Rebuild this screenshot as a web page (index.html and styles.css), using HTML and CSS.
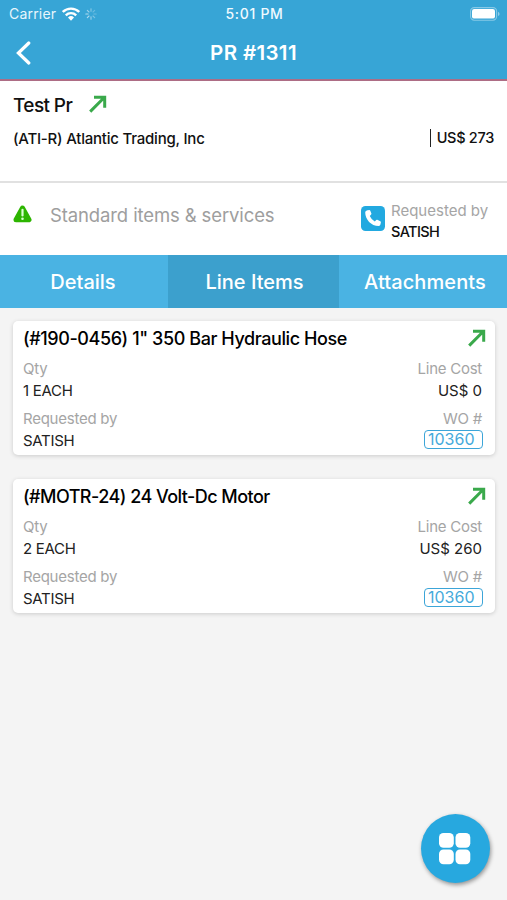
FILE: index.html
```html
<!DOCTYPE html>
<html lang="en">
<head>
<meta charset="utf-8">
<title>PR #1311</title>
<link rel="stylesheet" href="styles.css">
</head>
<body>
<svg width="0" height="0" class="defs">
  <symbol id="arrow" viewBox="0 0 18 18"><path d="M1.2 16.6 14.500 3.300M5 2.300H15.700v10.500" fill="none" stroke="currentColor" stroke-width="3"/></symbol>
</svg>
<header class="header">
  <div class="status">
    <div class="status-left">
      <span class="carrier">Carrier</span>
      <svg class="wifi" width="18" height="14" viewBox="0 0 18 14"><g fill="none" stroke="#fff" stroke-width="2.4"><path d="M.8 5A11.7 11.7 0 0 1 17.2 5"/><path d="M3.8 8.3a7.4 7.4 0 0 1 10.4 0"/></g><path d="M6 10.4a4.4 4.4 0 0 1 6 0L9 13.7z" fill="#fff"/></svg>
      <svg class="spinner" width="12" height="12" viewBox="0 0 12 12"><g stroke="#fff" stroke-width="1.1" stroke-linecap="round"><path d="M6 .8v2.4" opacity=".4"/><path d="M9.7 2.3 8 4" opacity=".25"/><path d="M11.2 6H8.8" opacity=".25"/><path d="M9.7 9.7 8 8" opacity=".35"/><path d="M6 11.2V8.8" opacity=".5"/><path d="M2.3 9.7 4 8" opacity=".6"/><path d="M.8 6h2.4" opacity=".6"/><path d="M2.3 2.3 4 4" opacity=".5"/></g></svg>
    </div>
    <span class="time">5:01 PM</span>
    <svg class="battery" width="30" height="14" viewBox="0 0 30 14"><rect x=".6" y=".6" width="26" height="12.6" rx="3.6" fill="none" stroke="#fff" stroke-opacity=".4" stroke-width="1.1"/><rect x="2" y="2" width="23" height="9.6" rx="2.2" fill="#fff"/><path d="M28 4.7q1.6.7 1.6 2.2T28 9.1z" fill="#fff" fill-opacity=".45"/></svg>
  </div>
  <div class="nav">
    <svg class="back" width="16" height="24" viewBox="0 0 16 24"><path d="M13.800 2 3.400 12l10.400 10" fill="none" stroke="#fff" stroke-width="3.200" stroke-linecap="round" stroke-linejoin="miter"/></svg>
    <h1 class="title">PR #1311</h1>
    <span></span>
  </div>
</header>
<section class="summary">
  <div class="summary-top"><h2 class="name">Test Pr</h2><svg class="arrow" width="18" height="18"><use href="#arrow"/></svg></div>
  <div class="summary-row"><span class="vendor">(ATI-R) Atlantic Trading, Inc</span><span class="total">US$ 273</span></div>
</section>
<section class="kind">
  <svg class="warn" width="19" height="18" viewBox="0 0 19 18"><path d="M9.5 3 16 14.8H3z" fill="#2db500" stroke="#2db500" stroke-width="5" stroke-linejoin="round"/><path d="M9.5 4.8v5.7" stroke="#d9ffd0" stroke-width="2.2" stroke-linecap="round"/><circle cx="9.5" cy="13.8" r="1.3" fill="#d9ffd0"/></svg>
  <span class="kind-label">Standard items &amp; services</span>
  <svg class="phone" width="24" height="25" viewBox="0 0 24 25"><rect width="24" height="25" rx="4.5" fill="#22a9e0"/><path d="M6.5 4.3 8.4 4q.6 0 .9.7l1.1 2.8q.2.6-.3 1.1L8.8 9.900q1.700 3.900 5 5.600l1.400-1.500q.5-.5 1.100-.2l3 1.400q.7.4.6 1l-.5 2.200q-.2 1.400-1.600 1.600C10 20 4.300 13.500 4.200 6.500Q4.200 4.700 6.500 4.300z" fill="#fff"/></svg>
  <div class="requester"><span class="muted">Requested by</span><span class="who">SATISH</span></div>
</section>
<nav class="tabs"><a class="tab t1">Details</a><a class="tab t2 active">Line Items</a><a class="tab t3">Attachments</a></nav>
<main class="list">
  <article class="card">
    <div class="card-head"><h3 class="item i1">(#190-0456) 1" 350 Bar Hydraulic Hose</h3><svg class="arrow" width="18" height="18"><use href="#arrow"/></svg></div>
    <div class="row"><span class="muted">Qty</span><span class="muted">Line Cost</span></div>
    <div class="row value"><span>1 EACH</span><span class="cost">US$ 0</span></div>
    <div class="row gap"><span class="muted">Requested by</span><span class="muted">WO #</span></div>
    <div class="row value"><span>SATISH</span><a class="wo">10360</a></div>
  </article>
  <article class="card">
    <div class="card-head"><h3 class="item i2">(#MOTR-24) 24 Volt-Dc Motor</h3><svg class="arrow" width="18" height="18"><use href="#arrow"/></svg></div>
    <div class="row"><span class="muted">Qty</span><span class="muted">Line Cost</span></div>
    <div class="row value"><span>2 EACH</span><span class="cost">US$ 260</span></div>
    <div class="row gap"><span class="muted">Requested by</span><span class="muted">WO #</span></div>
    <div class="row value"><span>SATISH</span><a class="wo">10360</a></div>
  </article>
</main>
<button class="fab" aria-label="Menu"><svg width="32" height="32" viewBox="0 0 32 32" fill="#fff"><rect x="0" y="0" width="14.800" height="14.800" rx="4.500"/><rect x="16.500" y="0" width="14.800" height="14.800" rx="4.500"/><rect x="0" y="16.500" width="14.800" height="14.800" rx="4.500"/><rect x="16.500" y="16.500" width="14.800" height="14.800" rx="4.500"/></svg></button>
</body>
</html>
```
FILE: styles.css
```css
* { box-sizing: border-box; }
body { margin: 0; height: 900px; background: #f4f4f4; font-family: Inter, "Liberation Sans", sans-serif; color: #111; overflow: hidden; display: flex; flex-direction: column; }
h1, h2, h3 { margin: 0; font-weight: 500; }
span, h1, h2, h3, a { white-space: nowrap; }
svg { flex: none; display: block; }
.defs { position: absolute; }
.header { height: 81px; flex: none; background: #37a5d6; border-bottom: 2px solid #ad6d85; color: #fff; }
.status { height: 27px; display: grid; grid-template-columns: 1fr auto 1fr; align-items: center; padding: 0 7px 0 9px; font-size: 14px; }
.status-left { display: flex; align-items: center; }
.carrier { letter-spacing: .2px; color: #e8f6fc; }
.wifi { margin-left: 6px; }
.spinner { margin-left: 5px; }
.time { font-weight: 500; font-size: 14px; letter-spacing: .7px; color: #f0faff; }
.battery { justify-self: end; }
.nav { height: 50px; display: grid; grid-template-columns: 1fr auto 1fr; align-items: center; padding: 0 15px; }
.title { font-size: 20.500px; font-weight: 600; line-height: 50px; letter-spacing: .35px; padding-top: 1px; }
.summary { height: 102px; flex: none; background: #fff; border-bottom: 2px solid #e1e1e1; padding: 11px 13px 0; }
.summary-top { display: flex; align-items: center; height: 24px; gap: 17px; }
.name { font-size: 19px; letter-spacing: -.6px; padding-top: 2px; }
.arrow { color: #3aa94b; }
.summary-row { display: flex; justify-content: space-between; align-items: center; margin-top: 12px; height: 20px; font-size: 15px; font-weight: 500; }
.vendor { letter-spacing: -.22px; }
.total { border-left: 1px solid #222; padding-left: 6px; line-height: 18px; letter-spacing: -.3px; font-size: 14.500px; }
.kind { height: 72px; flex: none; background: #fff; display: flex; align-items: flex-start; padding: 0 13px; }
.warn { margin-top: 22px; }
.kind-label { margin: 20px auto 0 18px; font-size: 18.500px; line-height: 24px; letter-spacing: -.12px; color: #9e9e9e; }
.phone { margin-top: 23px; }
.requester { margin: 18px 0 0 6px; width: 103px; display: flex; flex-direction: column; line-height: 20px; }
.requester .muted { letter-spacing: 0; }
.who { font-size: 14.500px; font-weight: 500; letter-spacing: -.6px; line-height: 21px; }
.tabs { height: 53px; flex: none; display: grid; grid-template-columns: 168px 171px 168px; background: #4ab3e3; }
.tab { color: #fff; font-size: 20px; font-weight: 500; line-height: 53px; height: 53px; padding-top: 1px; text-align: center; overflow: hidden; }
.t1 { padding-right: 2px; }
.t2 { padding-left: 2px; }
.t3 { padding-left: 4px; letter-spacing: .1px; }
.active { background: #3ca0cd; }
.list { padding: 13px 12px 0 13px; display: flex; flex-direction: column; gap: 24px; }
.card { height: 134px; background: #fff; border-radius: 5px; box-shadow: 0 1px 4px rgba(0,0,0,.17); padding: 4px 10px 0; }
.card-head { display: flex; justify-content: space-between; align-items: center; height: 25px; margin-right: -1px; }
.item { font-size: 18px; letter-spacing: -.42px; color: #000; padding-top: 2px; }
.i2 { letter-spacing: -.54px; }
.row { display: flex; justify-content: space-between; align-items: center; height: 22px; padding-right: 3px; margin-top: 7px; }
.muted { font-size: 15px; color: #a5a5a5; letter-spacing: -.25px; }
.row.value { height: 21px; margin-top: 1px; font-size: 15px; letter-spacing: -.3px; color: #222; }
.row.gap { margin-top: 7px; height: 21px; }
.cost { letter-spacing: 0; }
.wo { width: 59px; height: 19px; margin: -2px -1px 0 0; border: 1.500px solid #3ca5d8; border-radius: 4px; line-height: 17px; padding-left: 3px; font-size: 16px; letter-spacing: 0; color: #45aadb; }
.fab { position: fixed; left: 421px; top: 814px; width: 69px; height: 69px; border: 0; border-radius: 50%; background: #27a8df; box-shadow: 1px 2px 4px rgba(0,0,0,.4); padding: 0 1px 0 0; display: grid; place-items: center; }
```
